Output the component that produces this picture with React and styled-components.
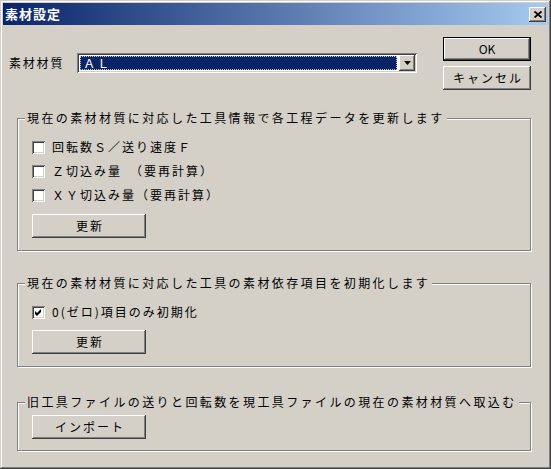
import React from 'react';
import styled, { createGlobalStyle, css } from 'styled-components';

const GlobalStyle = createGlobalStyle`
  html, body {
    margin: 0;
    padding: 0;
    background: #d4d0c8;
  }
  body {
    font-family: "Noto Sans CJK JP", "DejaVu Sans", sans-serif;
  }
`;

const raised = css`
  box-shadow: inset -1px -1px #404040, inset 1px 1px #ffffff,
    inset -2px -2px #808080, inset 2px 2px #d4d0c8;
`;

const sunken = css`
  box-shadow: inset 1px 1px #808080, inset -1px -1px #ffffff,
    inset 2px 2px #404040, inset -2px -2px #d4d0c8;
`;

const Window = styled.div`
  width: 551px;
  height: 469px;
  box-sizing: border-box;
  padding: 3px;
  background: #d4d0c8;
  box-shadow: inset -1px -1px #404040, inset 1px 1px #d4d0c8,
    inset -2px -2px #808080, inset 2px 2px #ffffff;
  display: flex;
  flex-direction: column;
  font-family: "Noto Sans CJK JP", sans-serif;
  font-size: 12px;
  color: #000;
`;

const TitleBar = styled.div`
  flex: none;
  height: 22px;
  padding: 0 2px 0 2px;
  display: flex;
  align-items: center;
  justify-content: space-between;
  background: linear-gradient(to right, #0a246a, #a6caf0);
`;

const TitleText = styled.span`
  color: #ffffff;
  font-weight: bold;
  font-size: 13px;
  letter-spacing: 1px;
  line-height: 16px;
`;

const CloseButton = styled.div`
  width: 17px;
  height: 15px;
  background: #d4d0c8;
  ${raised};
  display: flex;
  align-items: center;
  justify-content: center;
`;

const Client = styled.div`
  flex: 1;
  padding: 12px 17px 0 6px;
  display: flex;
  flex-direction: column;
`;

const TopRow = styled.div`
  display: flex;
  justify-content: space-between;
  align-items: flex-start;
`;

const SelectRow = styled.div`
  margin-top: 16px;
  display: flex;
  align-items: center;
  gap: 13px;
`;

const Label = styled.span`
  font-size: 12px;
  line-height: 14px;
  letter-spacing: ${(p) => p.$ls || 2}px;
  white-space: nowrap;
`;

const Combo = styled.div`
  width: 340px;
  height: 20px;
  box-sizing: border-box;
  padding: 2px;
  background: #ffffff;
  ${sunken};
  display: flex;
`;

const ComboValue = styled.div`
  flex: 1;
  margin: 1px 2px 1px 1px;
  padding-left: 3px;
  background: #0a246a;
  outline: 1px dotted #c8c8a0;
  outline-offset: -1px;
  color: #ffffff;
  font-size: 12px;
  line-height: 14px;
  letter-spacing: 2px;
`;

const DropButton = styled.div`
  width: 16px;
  height: 16px;
  background: #d4d0c8;
  ${raised};
  display: flex;
  align-items: center;
  justify-content: center;
`;

const ButtonColumn = styled.div`
  display: flex;
  flex-direction: column;
  gap: 5px;
`;

const Button = styled.div`
  width: ${(p) => p.$w}px;
  height: 24px;
  box-sizing: border-box;
  padding-left: ${(p) => p.$ls ?? 2}px;
  background: #d4d0c8;
  ${raised};
  ${(p) =>
    p.$default &&
    css`
      box-shadow: inset 0 0 0 1px #000000, inset -2px -2px #404040,
        inset 2px 2px #ffffff, inset -3px -3px #808080;
    `}
  display: flex;
  align-items: center;
  justify-content: center;
  font-size: 12px;
  line-height: 14px;
  letter-spacing: ${(p) => p.$ls ?? 2}px;
`;

const Group = styled.fieldset`
  margin: ${(p) => p.$mt}px 0 0 8px;
  padding: 0;
  min-width: 0;
  border: 1px solid #808080;
  box-shadow: inset 1px 1px #ffffff, 1px 1px #ffffff;
`;

const Legend = styled.legend`
  margin-left: 7px;
  padding: 0 2px 0 2px;
  background: #d4d0c8;
  font-size: 12px;
  line-height: 14px;
  letter-spacing: 2.4px;
  white-space: nowrap;
`;

const GroupBody = styled.div`
  padding: ${(p) => p.$pt}px 12px ${(p) => p.$pb}px 14px;
  display: flex;
  flex-direction: column;
  align-items: flex-start;
`;

const CheckRow = styled.div`
  height: 24px;
  display: flex;
  align-items: center;
  gap: 7px;
`;

const CheckBox = styled.div`
  width: 13px;
  height: 13px;
  box-sizing: border-box;
  background: #ffffff;
  ${sunken};
  display: flex;
  align-items: center;
  justify-content: center;
`;

const ButtonRow = styled.div`
  margin-top: ${(p) => p.$mt}px;
`;

const CheckMark = () => (
  <svg width="7" height="7" viewBox="0 0 7 7">
    <path d="M0 2 L2 4 L6 0 L6 3 L2 7 L0 5 Z" fill="#000" />
  </svg>
);

const Check = ({ checked, children }) => (
  <CheckRow>
    <CheckBox>{checked && <CheckMark />}</CheckBox>
    <Label>{children}</Label>
  </CheckRow>
);

const App = () => (
  <>
    <GlobalStyle />
    <Window>
      <TitleBar>
        <TitleText>素材設定</TitleText>
        <CloseButton>
          <svg width="8" height="7" viewBox="0 0 8 7">
            <path d="M0.5 0.5 L7.5 6.5 M7.5 0.5 L0.5 6.5" stroke="#000" strokeWidth="1.8" />
          </svg>
        </CloseButton>
      </TitleBar>

      <Client>
        <TopRow>
          <SelectRow>
            <Label $ls={1.8}>素材材質</Label>
            <Combo>
              <ComboValue>ＡＬ</ComboValue>
              <DropButton>
                <svg width="7" height="4" viewBox="0 0 7 4">
                  <path d="M0 0 H7 L3.5 4 Z" fill="#000" />
                </svg>
              </DropButton>
            </Combo>
          </SelectRow>
          <ButtonColumn>
            <Button $w={88} $default $ls={0}>OK</Button>
            <Button $w={88}>キャンセル</Button>
          </ButtonColumn>
        </TopRow>

        <Group $mt={21}>
          <Legend>現在の素材材質に対応した工具情報で各工程データを更新します</Legend>
          <GroupBody $pt={10} $pb={12}>
            <Check>回転数Ｓ／送り速度Ｆ</Check>
            <Check>Ｚ切込み量　（要再計算）</Check>
            <Check>ＸＹ切込み量（要再計算）</Check>
            <ButtonRow $mt={7}>
              <Button $w={114}>更新</Button>
            </ButtonRow>
          </GroupBody>
        </Group>

        <Group $mt={25}>
          <Legend>現在の素材材質に対応した工具の素材依存項目を初期化します</Legend>
          <GroupBody $pt={10} $pb={12}>
            <Check checked>0(ゼロ)項目のみ初期化</Check>
            <ButtonRow $mt={6}>
              <Button $w={114}>更新</Button>
            </ButtonRow>
          </GroupBody>
        </Group>

        <Group $mt={28}>
          <Legend>旧工具ファイルの送りと回転数を現工具ファイルの現在の素材材質へ取込む</Legend>
          <GroupBody $pt={6} $pb={11}>
            <Button $w={114}>インポート</Button>
          </GroupBody>
        </Group>
      </Client>
    </Window>
  </>
);

export default App;
